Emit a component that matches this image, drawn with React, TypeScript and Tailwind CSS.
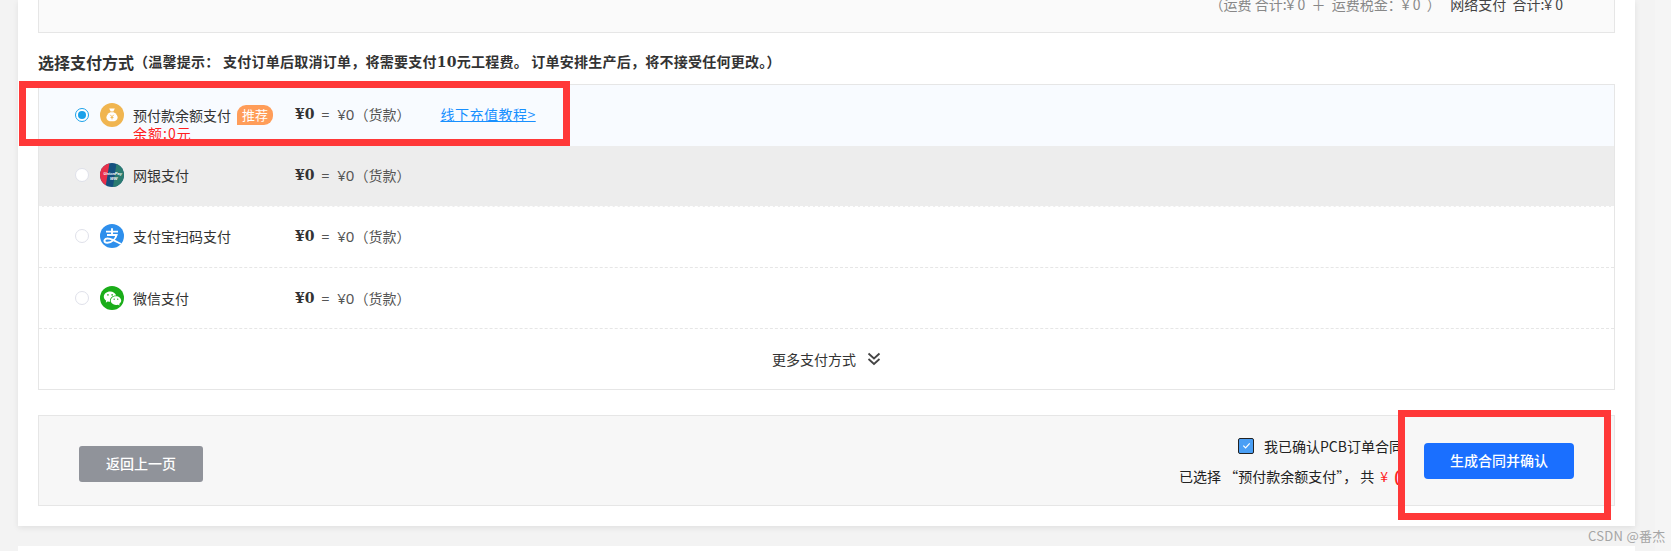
import React from "react";
import { RiWechatFill } from "react-icons/ri";

const cjk = "font-['Noto_Sans_CJK_SC','Noto_Sans',sans-serif]";

function Radio({ checked }: { checked?: boolean }) {
  return checked ? (
    <span className="flex h-[14px] w-[14px] shrink-0 items-center justify-center rounded-full border border-[#1aa1ea] bg-white">
      <span className="h-[8px] w-[8px] rounded-full bg-[#1aa1ea]" />
    </span>
  ) : (
    <span className="h-[14px] w-[14px] shrink-0 rounded-full border border-[#dfe1ea] bg-white" />
  );
}

function BagIcon() {
  return (
    <svg viewBox="0 0 24 24" className="h-[24px] w-[24px] shrink-0">
      <circle cx="12" cy="12" r="12" fill="#f0b550" />
      <path d="M9.2 5.6h5.6l-1.5 3h-2.6z" fill="#fff" />
      <path d="M10.4 9.2h3.2c2.6 1.3 4 3.300 4 5.200 0 2.500-2.200 3.900-5.600 3.900s-5.600-1.400-5.600-3.900c0-1.900 1.400-3.900 4-5.200z" fill="#fff" />
      <path d="M10.300 11.800l1.700 2 1.700-2M12 13.800v2.600M10.500 14.500h3" stroke="#f0b550" strokeWidth="0.9" fill="none" />
    </svg>
  );
}

function BankIcon() {
  return (
    <svg viewBox="0 0 24 24" className="h-[24px] w-[24px] shrink-0">
      <defs>
        <clipPath id="bankClip">
          <circle cx="12" cy="12" r="12" />
        </clipPath>
      </defs>
      <g clipPath="url(#bankClip)">
        <rect width="24" height="24" fill="#14507f" />
        <path d="M0 0h9.500L5.500 24H0z" fill="#e8304a" />
        <path d="M16.500 0H24v24h-11z" fill="#2a7b70" />
        <text x="3.500" y="12" fontSize="4" fontStyle="italic" fontWeight="700" fill="#fff" fontFamily="Liberation Sans, sans-serif">
          UnionPay
        </text>
        <text x="10" y="16.500" fontSize="4" fontStyle="italic" fontWeight="700" fill="#fff" fontFamily="Liberation Sans, sans-serif">
          WW
        </text>
      </g>
    </svg>
  );
}

function AlipayIcon() {
  return (
    <svg viewBox="0 0 24 24" className="h-[24px] w-[24px] shrink-0">
      <defs>
        <clipPath id="aliClip">
          <circle cx="12" cy="12" r="12" />
        </clipPath>
      </defs>
      <g clipPath="url(#aliClip)">
        <rect width="24" height="24" fill="#2e8fec" />
        <path
          d="M6 7.600h12M12 4.200v6.800M7 11h9.600c-1.200 4.200-4.800 7.600-9.300 7.800-2.300 0-3.200-1.300-2.700-2.600.7-1.700 3.300-2 5.600-1.300 3.500 1 7.200 3.500 14 6.600"
          stroke="#fff"
          strokeWidth="1.900"
          fill="none"
        />
      </g>
    </svg>
  );
}

function WechatIcon() {
  return (
    <span className="flex h-[24px] w-[24px] shrink-0 items-center justify-center rounded-full bg-[#1aad19] text-white">
      <RiWechatFill size={19} />
    </span>
  );
}

function Price() {
  return (
    <span className="flex items-center text-[14px] text-[#555]">
      <b className="font-['DejaVu_Serif',serif] text-[#333]">¥0</b>
      <span className="ml-[7px]">=</span>
      <span className="ml-[8px] text-[15px] font-['Noto_Sans',sans-serif]">¥0</span>
      <span>（货款）</span>
    </span>
  );
}

function PayRow({
  icon,
  label,
  className,
  radio,
  children,
  badge,
  sub,
}: {
  icon: React.ReactNode;
  label: string;
  className: string;
  radio?: boolean;
  children?: React.ReactNode;
  badge?: boolean;
  sub?: boolean;
}) {
  return (
    <div className={`relative flex h-[61px] items-center pl-[36px] pb-[2px] ${className}`}>
      <Radio checked={radio} />
      <span className="ml-[11px]">{icon}</span>
      <span className="relative ml-[9px] flex w-[162px] items-center leading-[20px] text-[#333]">
        <span className="text-[14px]">{label}</span>
        {badge && (
          <span className="ml-[6px] flex h-[20px] w-[36px] items-center justify-center rounded-[9px] rounded-bl-none bg-[#ff9d59] text-[13px] text-white">
            推荐
          </span>
        )}
        {sub && <span className="absolute left-0 top-[18px] text-[14px] tracking-[1px] text-[#ff1f1f]">余额:0元</span>}
      </span>
      <Price />
      {children}
    </div>
  );
}

export default function App() {
  return (
    <div className={`relative flex h-[551px] w-[1671px] overflow-hidden bg-[#f3f3f3] ${cjk}`}>
      <main className="ml-[18px] flex w-[1617px] shrink-0 flex-col gap-[20px]">
        <section className="h-[526px] shrink-0 bg-white px-[20px] shadow-[0_2px_6px_rgba(0,0,0,0.08)]">
          <div className="flex h-[33px] justify-end border border-t-0 border-[#e6e6e6] bg-[#fafafa] pr-[51px]">
            <p className="-mt-[6px] h-[20px] whitespace-pre text-[14px] leading-[20px] text-[#888]">
              {"（运费 合计:¥ 0  ＋  运费税金：¥ 0  ）   "}
              <span className="text-[#444]">{"网络支付  合计:¥ 0"}</span>
            </p>
          </div>

          <h2 className="mt-[18px] flex h-[22px] items-center whitespace-nowrap font-bold text-[#333]">
            <span className="text-[16px]">选择支付方式</span>
            <span className="text-[14px] tracking-[0.25px]">
              （温馨提示： 支付订单后取消订单，将需要支付
              <span className="font-['DejaVu_Serif',serif]">10</span>
              元工程费。 订单安排生产后，将不接受任何更改。）
            </span>
          </h2>

          <div className="mt-[11px] border border-[#e6e6e6]">
            <PayRow icon={<BagIcon />} label="预付款余额支付" className="bg-[#f8fbff]" radio badge sub>
              <a className="ml-[30px] text-[14px] tracking-[0.5px] text-[#1890ff] underline">线下充值教程&gt;</a>
            </PayRow>
            <PayRow icon={<BankIcon />} label="网银支付" className="border-b border-dashed border-white bg-[#ededed]" />
            <PayRow icon={<AlipayIcon />} label="支付宝扫码支付" className="border-b border-dashed border-[#e6e6e6]" />
            <PayRow icon={<WechatIcon />} label="微信支付" className="border-b border-dashed border-[#e6e6e6] !pb-0" />
            <div className="flex h-[60px] items-center justify-center gap-[11px] text-[14px] text-[#333]">
              <span>更多支付方式</span>
              <svg viewBox="0 0 14 14" className="h-[14px] w-[14px]" fill="none" stroke="#444" strokeWidth="1.800">
                <path d="M1.500 1.500l5.500 5L12.500 1.500M1.500 7L7 12l5.500-5" />
              </svg>
            </div>
          </div>

          <div className="mt-[25px] flex h-[91px] items-center justify-between border border-[#e6e6e6] bg-[#f7f7f7] pl-[40px] pr-[40px]">
            <button className="mt-[6px] h-[36px] w-[124px] rounded-[3px] bg-[#90939a] text-[14px] font-medium text-white">
              返回上一页
            </button>
            <div className="flex items-center">
              <div className="flex w-[226px] flex-col gap-[12px] overflow-hidden whitespace-nowrap text-[14px] leading-[18px] text-[#222]">
                <div className="ml-[59px] flex items-center gap-[10px]">
                  <span className="flex h-[16px] w-[16px] items-center justify-center rounded-[2px] border border-[#222] bg-[#4a9ff5]">
                    <svg viewBox="0 0 12 12" className="h-[11px] w-[11px]" fill="none" stroke="#fff" strokeWidth="1.300">
                      <path d="M2.500 6.200l2.500 2.500 4.500-5" />
                    </svg>
                  </span>
                  <span>我已确认PCB订单合同</span>
                </div>
                <div className="flex h-[18px] items-center">
                  <span className="whitespace-pre">{"已选择 “预付款余额支付”， 共"}</span>
                  <span className="ml-[6px] text-[#ff1f1f]">¥</span>
                  <span className="ml-[6px] text-[22px] text-[#ff1f1f]">0</span>
                </div>
              </div>
              <button className="ml-[19px] h-[36px] w-[150px] rounded-[4px] bg-[#1a6fff] text-[14px] font-medium text-white">
                生成合同并确认
              </button>
            </div>
          </div>
        </section>
        <section className="h-[40px] shrink-0 bg-white" />
      </main>

      <div className="ml-[20px] w-[16px] shrink-0 bg-[#f5f5f5]" />

      <div className="pointer-events-none absolute left-[19px] top-[81px] h-[65px] w-[551px] border-[7px] border-[#ff3838]" />
      <div className="pointer-events-none absolute left-[1398px] top-[410px] h-[110px] w-[213px] border-[7px] border-[#ff3838]" />
      <span className="absolute left-[1588px] top-[528px] text-[13px] leading-[16px] tracking-[0.3px] text-[#a5a5a5]">CSDN @番杰</span>
    </div>
  );
}
